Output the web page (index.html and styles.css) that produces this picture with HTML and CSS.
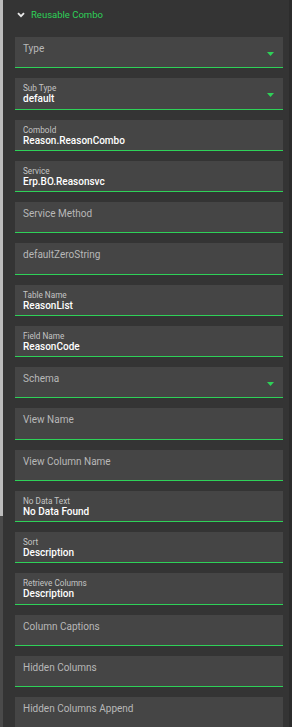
FILE: index.html
```html
<!DOCTYPE html>
<html>
<head>
<meta charset="utf-8">
<link rel="stylesheet" href="styles.css">
</head>
<body>
<div class="layout">
  <div class="edge-left"></div>
  <div class="panel">
    <div class="header">
      <svg class="chev" width="8" height="6" viewBox="0 0 8 6"><path d="M1 1.2 L4 4.2 L7 1.2" fill="none" stroke="#e8e8e8" stroke-width="1.9"/></svg>
      <span class="title">Reusable Combo</span>
    </div>
    <div class="field"><div class="body"><div class="ph">Type</div></div><svg class="caret" width="7" height="4" viewBox="0 0 7 4"><path d="M0 0 H7 L3.5 4 Z" fill="#2ed158"/></svg></div>
    <div class="field"><div class="body"><div class="lbl">Sub Type</div><div class="val">default</div></div><svg class="caret" width="7" height="4" viewBox="0 0 7 4"><path d="M0 0 H7 L3.5 4 Z" fill="#2ed158"/></svg></div>
    <div class="field"><div class="body"><div class="lbl">ComboId</div><div class="val">Reason.ReasonCombo</div></div></div>
    <div class="field"><div class="body"><div class="lbl">Service</div><div class="val">Erp.BO.Reasonsvc</div></div></div>
    <div class="field"><div class="body"><div class="ph">Service Method</div></div></div>
    <div class="field"><div class="body"><div class="ph">defaultZeroString</div></div></div>
    <div class="field"><div class="body"><div class="lbl">Table Name</div><div class="val">ReasonList</div></div></div>
    <div class="field"><div class="body"><div class="lbl">Field Name</div><div class="val">ReasonCode</div></div></div>
    <div class="field"><div class="body"><div class="ph">Schema</div></div><svg class="caret" width="7" height="4" viewBox="0 0 7 4"><path d="M0 0 H7 L3.5 4 Z" fill="#2ed158"/></svg></div>
    <div class="field"><div class="body"><div class="ph">View Name</div></div></div>
    <div class="field"><div class="body"><div class="ph">View Column Name</div></div></div>
    <div class="field"><div class="body"><div class="lbl">No Data Text</div><div class="val">No Data Found</div></div></div>
    <div class="field"><div class="body"><div class="lbl">Sort</div><div class="val">Description</div></div></div>
    <div class="field"><div class="body"><div class="lbl">Retrieve Columns</div><div class="val">Description</div></div></div>
    <div class="field"><div class="body"><div class="ph">Column Captions</div></div></div>
    <div class="field"><div class="body"><div class="ph">Hidden Columns</div></div></div>
    <div class="field"><div class="body"><div class="ph">Hidden Columns Append</div></div></div>
  </div>
  <div class="edge-right"></div>
</div>
</body>
</html>
```
FILE: styles.css
```css
html, body {
  margin: 0;
  padding: 0;
  background: #333333;
  font-family: Roboto, "Liberation Sans", sans-serif;
}
.layout {
  display: flex;
  width: 292px;
  height: 727px;
  overflow: hidden;
}
.edge-left {
  width: 3px;
  flex: none;
  background: linear-gradient(to bottom, #bcbcbc 0, #bcbcbc 516px, #4a4a4a 516px, #4a4a4a 100%);
}
.panel {
  flex: 1;
  padding: 0 6px 0 12px;
  background: #343434;
}
.edge-right {
  width: 3px;
  flex: none;
  background: #2c2c2c;
}
.header {
  height: 28px;
  display: flex;
  align-items: center;
  padding-left: 2px;
  padding-bottom: 9px;
}
.chev {
  margin-right: 6px;
  margin-top: 1px;
}
.title {
  color: #2ed158;
  font-size: 9.5px;
}
.field {
  display: flex;
  height: 31.25px;
  box-sizing: border-box;
  background: #454545;
  border-bottom: 1px solid #2ed158;
  margin-bottom: 10px;
  padding-left: 8px;
}
.body {
  flex: 1;
  min-width: 0;
}
.ph {
  color: #b8b8b8;
  font-size: 10px;
  line-height: 12px;
  padding-top: 6px;
}
.lbl {
  color: #c4c4c4;
  font-size: 8.2px;
  line-height: 10px;
  padding-top: 5px;
}
.val {
  color: #ffffff;
  font-size: 10px;
  font-weight: 500;
  line-height: 12px;
}
.caret {
  flex: none;
  margin-top: 15px;
  margin-right: 9px;
}
```
